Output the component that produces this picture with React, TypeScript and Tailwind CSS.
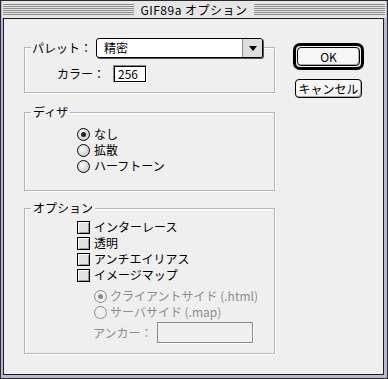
import React from "react";

function GroupBox({
  label,
  heightClass,
  children,
}: {
  label?: string;
  heightClass: string;
  children: React.ReactNode;
}) {
  return (
    <div
      className={`relative w-[251px] border border-[#b4b4b4] shadow-[1px_1px_0_#fff,inset_1px_1px_0_#fff] ${heightClass}`}
    >
      {label && (
        <span className="absolute -top-[9px] left-[6px] bg-[#efefef] px-[2px] leading-4">
          {label}
        </span>
      )}
      {children}
    </div>
  );
}

function Radio({ checked, disabled }: { checked?: boolean; disabled?: boolean }) {
  return (
    <span
      className={`flex h-[13px] w-[13px] shrink-0 items-center justify-center rounded-full border ${
        disabled
          ? "border-[#8a8a8a] bg-[#efefef]"
          : "border-black bg-[radial-gradient(circle_at_35%_35%,#ffffff,#b8b8b8)]"
      }`}
    >
      {checked && (
        <span
          className={`h-[5px] w-[5px] rounded-full ${
            disabled ? "bg-[#8a8a8a]" : "bg-[#222]"
          }`}
        />
      )}
    </span>
  );
}

function Checkbox() {
  return (
    <span className="h-[13px] w-[13px] shrink-0 border border-black bg-[#e2e2e2] shadow-[inset_1px_1px_0_#fff,inset_-1px_-1px_0_#9a9a9a]" />
  );
}

function Row({ children, className = "" }: { children: React.ReactNode; className?: string }) {
  return <div className={`flex h-4 items-center ${className}`}>{children}</div>;
}

function TitleStripes() {
  return (
    <div className="flex flex-1 flex-col gap-[1px] py-[3px]">
      {[0, 1, 2, 3, 4, 5].map((i) => (
        <div key={i} className="h-[1px] bg-[#8c8c8c]" />
      ))}
    </div>
  );
}

export default function App() {
  return (
    <div className="flex h-[379px] w-[388px] flex-col border border-[#2a2a2a] bg-[#b8b8d0] pb-[3px] pl-[2px] pr-[3px] font-['Noto_Sans_CJK_JP','Noto_Sans',sans-serif] text-[12px] text-black">
      {/* Title bar */}
      <div className="-ml-[1px] -mr-[2px] flex h-[17px] items-center bg-[#e6e6e6] px-[1px]">
        <TitleStripes />
        <span className="px-[6px] leading-4 tracking-[0.5px]">GIF89a オプション</span>
        <TitleStripes />
      </div>

      {/* Dialog body */}
      <div className="flex flex-1 border border-[#1c1c1c] bg-[#efefef] pl-[20px]">
        {/* Left column */}
        <div className="flex flex-col pt-[28px]">
          {/* Palette */}
          <GroupBox heightClass="h-[46px]">
            <div className="absolute -top-[10px] left-[6px] flex items-center">
              <span className="w-[65px] bg-[#efefef] px-[1px] leading-4">パレット：</span>
              <div className="flex h-[20px] w-[167px] rounded-[3px] border border-black bg-white shadow-[1px_1px_0_#555]">
                <span className="flex-1 pl-[7px] leading-[18px]">精密</span>
                <span className="flex w-[20px] items-center justify-center rounded-r-[2px] border-l border-[#888] bg-[#dedede]">
                  <span className="h-0 w-0 border-x-[4px] border-t-[5px] border-x-transparent border-t-black" />
                </span>
              </div>
            </div>
            <div className="ml-[32px] mt-[17px] flex h-[18px] items-center">
              <span className="w-[56px] leading-4">カラー：</span>
              <div className="border border-[#8a8a8a] border-b-white border-r-white">
                <div className="h-[16px] w-[32px] border border-black bg-white pl-[3px] leading-[14px]">
                  256
                </div>
              </div>
            </div>
          </GroupBox>

          {/* Dither */}
          <div className="mt-[19px]">
            <GroupBox label="ディザ" heightClass="h-[79px]">
              <div className="ml-[52px] pt-[13px]">
                <Row className="gap-[4px]">
                  <Radio checked />
                  <span>なし</span>
                </Row>
                <Row className="gap-[4px]">
                  <Radio />
                  <span>拡散</span>
                </Row>
                <Row className="gap-[4px]">
                  <Radio />
                  <span>ハーフトーン</span>
                </Row>
              </div>
            </GroupBox>
          </div>

          {/* Options */}
          <div className="mt-[17px]">
            <GroupBox label="オプション" heightClass="h-[146px]">
              <div className="ml-[52px] pt-[10px]">
                {["インターレース", "透明", "アンチエイリアス", "イメージマップ"].map((t) => (
                  <Row key={t} className="gap-[4px]">
                    <Checkbox />
                    <span>{t}</span>
                  </Row>
                ))}
              </div>
              <div className="ml-[69px] mt-[5px] text-[#8c8c8c]">
                <Row className="gap-[3px]">
                  <Radio checked disabled />
                  <span>クライアントサイド (.html)</span>
                </Row>
                <Row className="gap-[3px]">
                  <Radio disabled />
                  <span>サーバサイド (.map)</span>
                </Row>
              </div>
              <div className="ml-[68px] mt-[2px] flex items-center text-[#8c8c8c]">
                <span className="w-[64px] leading-4">アンカー：</span>
                <div className="h-[21px] w-[96px] border border-[#8a8a8a] shadow-[1px_1px_0_#fff]" />
              </div>
            </GroupBox>
          </div>
        </div>

        {/* Buttons */}
        <div className="ml-[18px] flex flex-col items-center pt-[24px]">
          <div className="rounded-[7px] border-[3px] border-black p-[1px]">
            <button className="flex h-[19px] w-[63px] items-center justify-center rounded-[4px] border border-black bg-[#f6f6f6] leading-4 shadow-[inset_-1px_-1px_0_#aaa]">
              OK
            </button>
          </div>
          <button className="mt-[9px] flex h-[19px] w-[67px] items-center justify-center rounded-[4px] border border-black bg-[#f6f6f6] leading-4 shadow-[inset_-1px_-1px_0_#aaa]">
            キャンセル
          </button>
        </div>
      </div>
    </div>
  );
}
